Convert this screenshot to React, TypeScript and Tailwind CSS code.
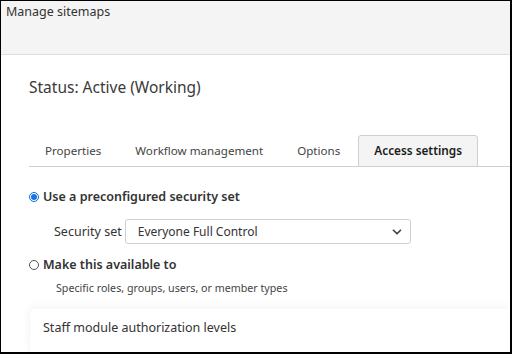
import { ChevronDown } from 'lucide-react';

const tabs = ['Properties', 'Workflow management', 'Options'];

const Radio = ({ checked }: { checked: boolean }) =>
  checked ? (
    <span className="w-[10px] h-[10px] rounded-full border border-[#0a6ed1] bg-white flex items-center justify-center">
      <span className="w-[6px] h-[6px] rounded-full bg-[#1a73e8]" />
    </span>
  ) : (
    <span className="w-[10px] h-[10px] rounded-full border border-[#555] bg-white" />
  );

export default function App() {
  return (
    <div
      className="w-[512px] h-[354px] overflow-hidden bg-white border-black border-l border-t border-r-2 border-b-2 text-[#333]"
      style={{ fontFamily: '"Noto Sans", "Open Sans", sans-serif' }}
    >
      <div className="h-[54px] bg-[#f4f4f4] border-b border-[#dedede] px-[5px] pt-[2px] text-[12.5px] leading-[18px]">
        Manage sitemaps
      </div>

      <div className="pl-[28px]">
        <div className="pt-[21px] text-[15.5px] leading-[22px] text-[#3a3a3a]">Status: Active (Working)</div>

        <div className="mt-[37px] flex items-end border-b border-[#cfcfcf] h-[32px]">
          {tabs.map((t) => (
            <div key={t} className="px-[16px] pb-[6px] text-[11.6px] leading-[18px] text-[#444] mr-[2px]">
              {t}
            </div>
          ))}
          <div className="-mb-px h-[32px] px-[15px] flex items-center bg-[#f4f4f4] border border-[#cfcfcf] rounded-t-[3px] text-[11.8px] font-semibold text-[#1a1a1a]">
            Access settings
          </div>
        </div>

        <div className="mt-[21px] flex items-center gap-[4px]">
          <Radio checked />
          <span className="text-[12.5px] font-semibold leading-[18px] text-[#333]">Use a preconfigured security set</span>
        </div>

        <div className="mt-[13px] ml-[25px] flex items-center gap-[3px]">
          <span className="text-[12.5px] text-[#333] leading-[18px]">Security set</span>
          <div className="w-[286px] h-[25px] border border-[#cfcfcf] rounded-[3px] flex items-center justify-between pl-[12px] pr-[6px] text-[12px] text-[#333]">
            <span>Everyone Full Control</span>
            <ChevronDown size={14} strokeWidth={3} className="text-[#444]" />
          </div>
        </div>

        <div className="mt-[12px] flex items-center gap-[4px]">
          <Radio checked={false} />
          <span className="text-[12.5px] font-semibold leading-[18px] text-[#333]">Make this available to</span>
        </div>

        <div className="mt-[6px] ml-[27px] text-[10.7px] leading-[16px] text-[#444]">
          Specific roles, groups, users, or member types
        </div>

        <div className="mt-[13px] h-[46px] bg-white rounded-tl-[4px] shadow-[0_-3px_10px_rgba(0,0,0,0.04)] border-l border-[#f6f6f6] pl-[13px] pt-[10px] text-[12.5px] leading-[18px] text-[#333]">
          Staff module authorization levels
        </div>
      </div>
    </div>
  );
}
